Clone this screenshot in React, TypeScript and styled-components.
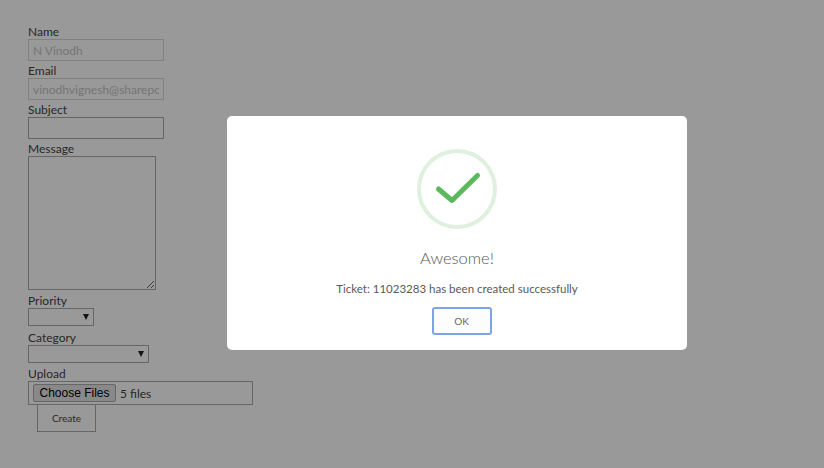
import styled, { createGlobalStyle } from "styled-components";

const GlobalStyle = createGlobalStyle`
  html, body {
    margin: 0;
    padding: 0;
    height: 100%;
    background: #fff;
    overflow: hidden;
  }
  body {
    font-family: Lato, "Open Sans", sans-serif;
    color: #333;
  }
`;

const Page = styled.div`
  width: 824px;
  height: 468px;
  padding: 22px 0 0 28px;
  box-sizing: border-box;
`;

const Form = styled.form`
  display: flex;
  flex-direction: column;
  align-items: flex-start;
`;

const Label = styled.label`
  display: block;
  font-size: 12px;
  line-height: 19px;
  height: 17px;
  color: #444;
`;

const TextInput = styled.input`
  display: block;
  box-sizing: border-box;
  width: 136px;
  height: 22px;
  padding: 0 4px;
  border: 1px solid ${(p) => (p.disabled ? "#d8d8d8" : "#aaa")};
  background: #fff;
  font-family: inherit;
  font-size: 12px;
  color: #c4c4c4;
  outline: none;
`;

const Message = styled.textarea`
  display: block;
  box-sizing: border-box;
  width: 128px;
  height: 134px;
  margin: 0 0 1px;
  padding: 2px;
  border: 1px solid #aaa;
  background: #fff;
`;

const SelectWrap = styled.div<{ $width: number; $gap: number }>`
  position: relative;
  width: ${(p) => p.$width}px;
  height: 18px;
  margin-bottom: ${(p) => p.$gap}px;
  &::after {
    content: "";
    position: absolute;
    right: 5px;
    top: 6px;
    border-left: 3.5px solid transparent;
    border-right: 3.5px solid transparent;
    border-top: 6px solid #222;
  }
`;

const Select = styled.select`
  display: block;
  box-sizing: border-box;
  width: 100%;
  height: 18px;
  border: 1px solid #aaa;
  border-radius: 0;
  background: #fff;
  appearance: none;
`;

const UploadBox = styled.div`
  box-sizing: border-box;
  width: 225px;
  height: 24px;
  padding: 0 4px;
  display: flex;
  align-items: center;
  gap: 4px;
  border: 1px solid #aaa;
`;

const ChooseButton = styled.button`
  box-sizing: border-box;
  width: 83px;
  height: 18px;
  padding: 0;
  border: 1px solid #aaa;
  border-radius: 2px;
  background: #e4e4e4;
  color: #000;
  font-family: "Liberation Sans", Arial, sans-serif;
  font-size: 12px;
`;

const FileCount = styled.span`
  font-size: 12px;
  color: #444;
`;

const CreateButton = styled.button`
  box-sizing: border-box;
  width: 59px;
  height: 27px;
  margin-left: 9px;
  border: 1px solid #aaa;
  border-top: none;
  padding: 0;
  background: #fff;
  color: #444;
  font-family: inherit;
  font-size: 10px;
`;

const Overlay = styled.div`
  position: fixed;
  inset: 0;
  background: rgba(0, 0, 0, 0.4);
  display: flex;
  justify-content: center;
  padding: 116px 0 0 90px;
  box-sizing: border-box;
`;

const Modal = styled.div`
  box-sizing: border-box;
  width: 460px;
  height: 234px;
  padding-top: 33px;
  border-radius: 5px;
  background: #fff;
  display: flex;
  flex-direction: column;
  align-items: center;
`;

const SuccessIcon = styled.svg`
  display: block;
  width: 80px;
  height: 80px;
`;

const Title = styled.h2`
  margin: 18px 0 0;
  font-size: 16.5px;
  line-height: 22px;
  font-weight: 300;
  color: #595959;
`;

const Text = styled.p`
  margin: 12px 0 0;
  font-size: 11.5px;
  line-height: 16px;
  color: #595959;
`;

const OkButton = styled.button`
  box-sizing: border-box;
  width: 60px;
  height: 28px;
  margin: 10px 0 0 9px;
  padding: 0;
  border: 2px solid #7ea3e6;
  border-radius: 3px;
  background: #fdfdfd;
  color: #666;
  font-family: inherit;
  font-size: 10px;
`;

export default function App() {
  return (
    <>
      <GlobalStyle />
      <Page>
        <Form>
          <Label>Name</Label>
          <TextInput disabled value="N Vinodh" readOnly />
          <Label>Email</Label>
          <TextInput disabled value="vinodhvignesh@sharepoint.com" readOnly />
          <Label>Subject</Label>
          <TextInput />
          <Label>Message</Label>
          <Message />
          <Label>Priority</Label>
          <SelectWrap $width={66} $gap={2}>
            <Select />
          </SelectWrap>
          <Label>Category</Label>
          <SelectWrap $width={121} $gap={1}>
            <Select />
          </SelectWrap>
          <Label>Upload</Label>
          <UploadBox>
            <ChooseButton type="button">Choose Files</ChooseButton>
            <FileCount>5 files</FileCount>
          </UploadBox>
          <CreateButton type="button">Create</CreateButton>
        </Form>
      </Page>
      <Overlay>
        <Modal>
          <SuccessIcon viewBox="0 0 80 80">
            <circle cx="40" cy="40" r="38" fill="none" stroke="#dff0df" strokeWidth="4" />
            <path
              d="M21.5 40 L35 51.5 L60.5 26.5"
              fill="none"
              stroke="#5cb85c"
              strokeWidth="5"
              strokeLinecap="round"
              strokeLinejoin="round"
            />
          </SuccessIcon>
          <Title>Awesome!</Title>
          <Text>Ticket: 11023283 has been created successfully</Text>
          <OkButton type="button">OK</OkButton>
        </Modal>
      </Overlay>
    </>
  );
}
